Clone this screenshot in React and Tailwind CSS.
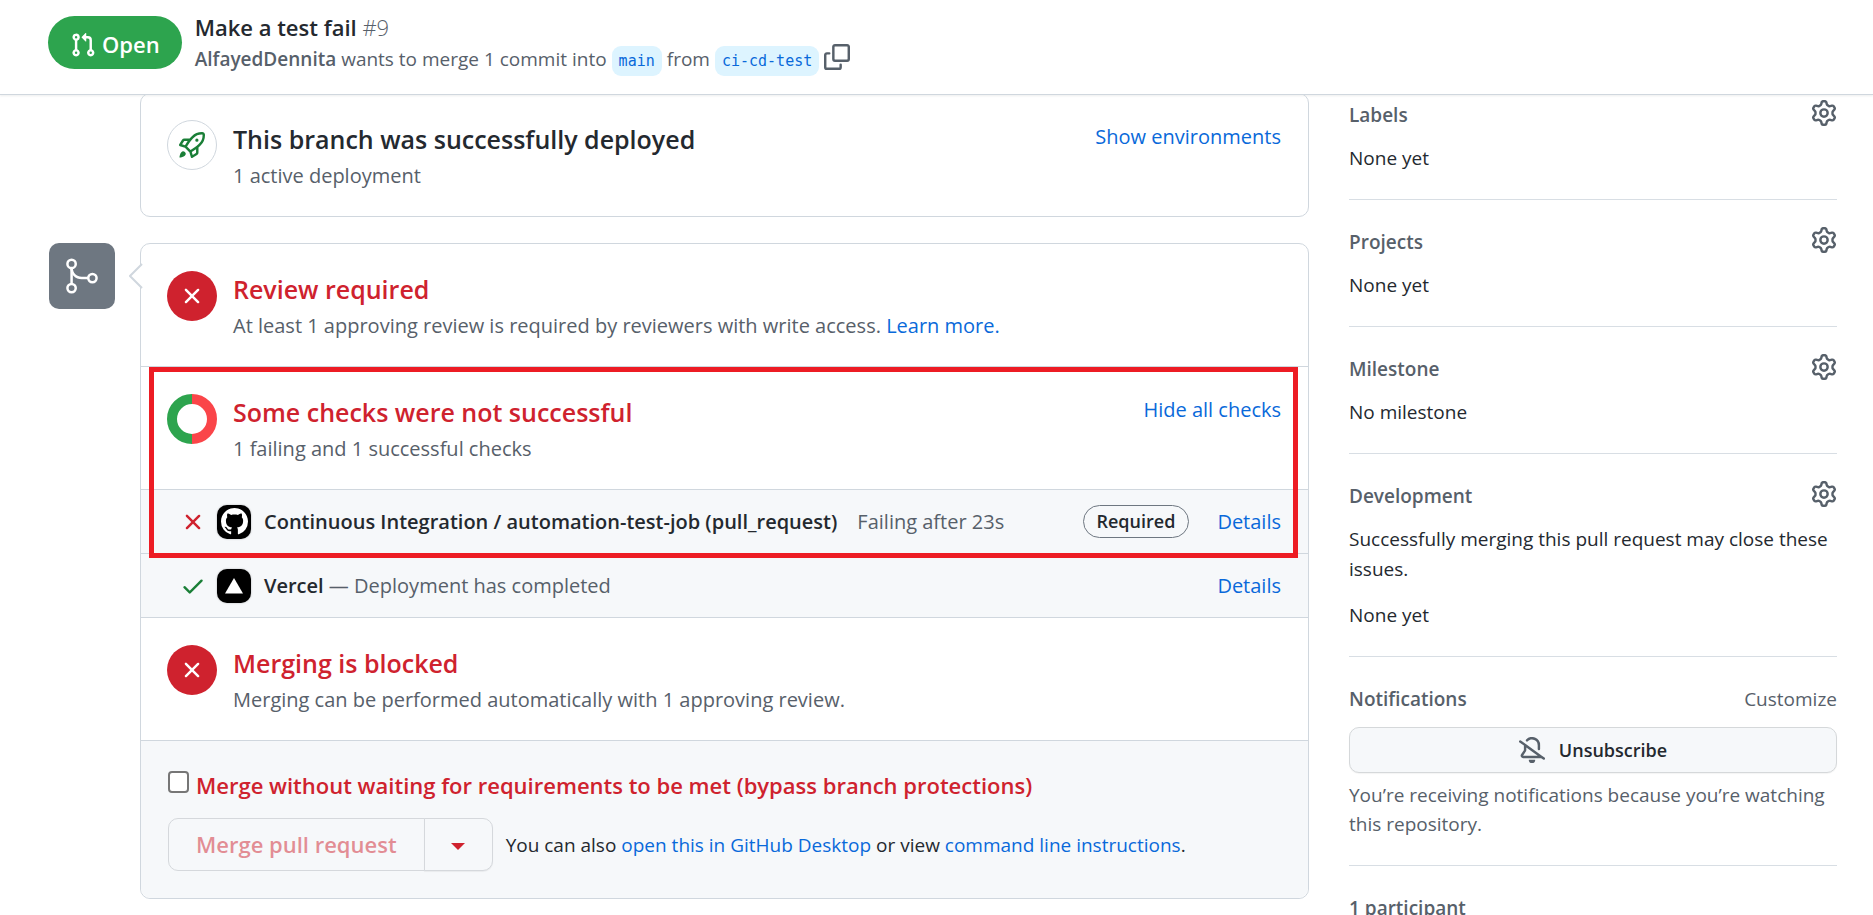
import React from "react";
import { GoGitMerge } from "react-icons/go";

const ICONS = {
  pullRequest:
    "M1.5 3.25a2.25 2.25 0 1 1 3 2.122v5.256a2.251 2.251 0 1 1-1.5 0V5.372A2.25 2.25 0 0 1 1.5 3.25Zm5.677-.177L9.573.677A.25.25 0 0 1 10 .854V2.5h1A2.5 2.5 0 0 1 13.5 5v5.628a2.251 2.251 0 1 1-1.5 0V5a1 1 0 0 0-1-1h-1v1.646a.25.25 0 0 1-.427.177L7.177 3.427a.25.25 0 0 1 0-.354ZM3.75 2.5a.75.75 0 1 0 0 1.5.75.75 0 0 0 0-1.5Zm0 9.5a.75.75 0 1 0 0 1.5.75.75 0 0 0 0-1.5Zm8.25.75a.75.75 0 1 0 1.5 0 .75.75 0 0 0-1.5 0Z",
  rocket:
    "M14.064 0h.186C15.216 0 16 .784 16 1.75v.186a8.752 8.752 0 0 1-2.564 6.186l-.458.459c-.314.314-.641.616-.979.904v3.207c0 .608-.315 1.172-.833 1.49l-2.774 1.707a.749.749 0 0 1-1.11-.418l-.954-3.102a1.214 1.214 0 0 1-.145-.125L3.754 9.816a1.218 1.218 0 0 1-.124-.145L.528 8.717a.749.749 0 0 1-.418-1.11l1.71-2.774A1.748 1.748 0 0 1 3.31 4h3.204c.288-.338.59-.665.904-.979l.459-.458A8.749 8.749 0 0 1 14.064 0ZM8.938 3.623h-.002l-.458.458c-.76.76-1.437 1.598-2.02 2.5l-1.5 2.317 2.143 2.143 2.317-1.5c.902-.583 1.74-1.26 2.499-2.02l.459-.458a7.25 7.25 0 0 0 2.123-5.127V1.75a.25.25 0 0 0-.25-.25h-.186a7.249 7.249 0 0 0-5.125 2.123ZM3.56 14.56c-.732.732-2.334 1.045-3.005 1.148a.234.234 0 0 1-.201-.064.234.234 0 0 1-.064-.201c.103-.671.416-2.273 1.15-3.003a1.502 1.502 0 1 1 2.12 2.12Zm6.94-3.935c-.088.06-.177.118-.266.175l-2.35 1.521.548 1.783 1.949-1.2a.25.25 0 0 0 .119-.213ZM3.678 8.116 5.2 5.766c.058-.09.117-.178.176-.266H3.309a.25.25 0 0 0-.213.119l-1.2 1.95ZM12 5a1 1 0 1 1-2 0 1 1 0 0 1 2 0Z",
  copy:
    "M0 6.75C0 5.784.784 5 1.75 5h1.5a.75.75 0 0 1 0 1.5h-1.5a.25.25 0 0 0-.25.25v7.5c0 .138.112.25.25.25h7.5a.25.25 0 0 0 .25-.25v-1.5a.75.75 0 0 1 1.5 0v1.5A1.75 1.75 0 0 1 9.25 16h-7.5A1.75 1.75 0 0 1 0 14.25ZM5 1.75C5 .784 5.784 0 6.75 0h7.5C15.216 0 16 .784 16 1.75v7.5A1.75 1.75 0 0 1 14.25 11h-7.5A1.75 1.75 0 0 1 5 9.25Zm1.75-.25a.25.25 0 0 0-.25.25v7.5c0 .138.112.25.25.25h7.5a.25.25 0 0 0 .25-.25v-7.5a.25.25 0 0 0-.25-.25Z",
  gear:
    "M8 0a8.2 8.2 0 0 1 .701.031C9.444.095 9.99.645 10.16 1.29l.288 1.107c.018.066.079.158.212.224.231.114.454.243.668.386.123.082.233.09.299.071l1.103-.303c.644-.176 1.392.021 1.82.63.27.385.506.792.704 1.218.315.675.111 1.422-.364 1.891l-.814.806c-.049.048-.098.147-.088.294.016.257.016.515 0 .772-.01.147.038.246.088.294l.814.806c.475.469.679 1.216.364 1.891a7.977 7.977 0 0 1-.704 1.217c-.428.61-1.176.807-1.82.63l-1.102-.302c-.067-.019-.177-.011-.3.071a5.909 5.909 0 0 1-.668.386c-.133.066-.194.158-.211.224l-.29 1.106c-.168.646-.715 1.196-1.458 1.26a8.006 8.006 0 0 1-1.402 0c-.743-.064-1.289-.614-1.458-1.26l-.289-1.106c-.018-.066-.079-.158-.212-.224a5.738 5.738 0 0 1-.668-.386c-.123-.082-.233-.09-.299-.071l-1.103.303c-.644.176-1.392-.021-1.82-.63a8.12 8.12 0 0 1-.704-1.218c-.315-.675-.111-1.422.363-1.891l.815-.806c.05-.048.098-.147.088-.294a6.214 6.214 0 0 1 0-.772c.01-.147-.038-.246-.088-.294l-.815-.806C.635 6.045.431 5.298.746 4.623a7.92 7.92 0 0 1 .704-1.217c.428-.61 1.176-.807 1.82-.63l1.102.302c.067.019.177.011.3-.071.214-.143.437-.272.668-.386.133-.066.194-.158.211-.224l.29-1.106C6.009.645 6.556.095 7.299.03 7.53.01 7.764 0 8 0Zm-.571 1.525c-.036.003-.108.036-.137.146l-.289 1.105c-.147.561-.549.967-.998 1.189-.173.086-.34.183-.5.29-.417.278-.97.423-1.529.27l-1.103-.303c-.109-.03-.175.016-.195.045-.22.312-.412.644-.573.99-.014.031-.021.11.059.19l.815.806c.411.406.562.957.53 1.456a4.709 4.709 0 0 0 0 .582c.032.499-.119 1.05-.53 1.456l-.815.806c-.081.08-.073.159-.059.19.162.346.353.677.573.989.02.03.085.076.195.046l1.102-.303c.56-.153 1.113-.008 1.53.27.161.107.328.204.501.29.447.222.85.629.997 1.189l.289 1.105c.029.109.101.143.137.146a6.6 6.6 0 0 0 1.142 0c.036-.003.108-.036.137-.146l.289-1.105c.147-.561.549-.967.998-1.189.173-.086.34-.183.5-.29.417-.278.97-.423 1.529-.27l1.103.303c.109.029.175-.016.195-.045.22-.313.411-.644.573-.99.014-.031.021-.11-.059-.19l-.815-.806c-.411-.406-.562-.957-.53-1.456a4.709 4.709 0 0 0 0-.582c-.032-.499.119-1.05.53-1.456l.815-.806c.081-.08.073-.159.059-.19a6.464 6.464 0 0 0-.573-.989c-.02-.03-.085-.076-.195-.046l-1.102.303c-.56.153-1.113.008-1.53-.27a4.44 4.44 0 0 0-.501-.29c-.447-.222-.85-.629-.997-1.189l-.289-1.105c-.029-.11-.101-.143-.137-.146a6.6 6.6 0 0 0-1.142 0ZM11 8a3 3 0 1 1-6 0 3 3 0 0 1 6 0ZM9.5 8a1.5 1.5 0 1 0-3.001.001A1.5 1.5 0 0 0 9.5 8Z",
  bellSlash:
    "m4.182 4.31.016.011 10.104 7.316.013.01 1.375.996a.75.75 0 1 1-.88 1.214L13.626 13H2.518a1.516 1.516 0 0 1-1.263-2.36l1.703-2.554A.255.255 0 0 0 3 7.947V5.305L.31 3.357a.75.75 0 1 1 .88-1.214Zm7.373 7.19L4.5 6.391v1.556c0 .346-.102.683-.294.97l-1.703 2.556a.017.017 0 0 0-.003.01c0 .005.002.009.005.012l.006.004.007.001ZM8 1.5c-.997 0-1.895.416-2.534 1.086A.75.75 0 1 1 4.38 1.55 5 5 0 0 1 13 5v2.373a.75.75 0 0 1-1.5 0V5A3.5 3.5 0 0 0 8 1.5ZM8 16a2 2 0 0 1-1.985-1.75c-.017-.137.097-.25.235-.25h3.5c.138 0 .252.113.235.25A2 2 0 0 1 8 16Z",
  x:
    "M3.72 3.72a.75.75 0 0 1 1.06 0L8 6.94l3.22-3.22a.749.749 0 0 1 1.275.326.749.749 0 0 1-.215.734L9.06 8l3.22 3.22a.749.749 0 0 1-.326 1.275.749.749 0 0 1-.734-.215L8 9.06l-3.22 3.22a.751.751 0 0 1-1.042-.018.751.751 0 0 1-.018-1.042L6.94 8 3.72 4.78a.75.75 0 0 1 0-1.06Z",
  check:
    "M13.78 4.22a.75.75 0 0 1 0 1.06l-7.25 7.25a.75.75 0 0 1-1.06 0L2.22 9.28a.751.751 0 0 1 .018-1.042.751.751 0 0 1 1.042-.018L6 10.94l6.72-6.72a.75.75 0 0 1 1.06 0Z",
  github:
    "M8 0c4.42 0 8 3.58 8 8a8.013 8.013 0 0 1-5.45 7.59c-.4.08-.55-.17-.55-.38 0-.27.01-1.13.01-2.2 0-.75-.25-1.23-.54-1.48 1.78-.2 3.65-.88 3.65-3.95 0-.88-.31-1.59-.82-2.15.08-.2.36-1.02-.08-2.12 0 0-.67-.22-2.2.82-.64-.18-1.32-.27-2-.27-.68 0-1.36.09-2 .27-1.53-1.03-2.2-.82-2.2-.82-.44 1.1-.16 1.92-.08 2.12-.51.56-.82 1.28-.82 2.15 0 3.06 1.86 3.75 3.64 3.95-.23.2-.44.55-.51 1.07-.46.21-1.61.55-2.33-.66-.15-.24-.6-.83-1.23-.82-.67.01-.27.38.01.53.34.19.73.9.82 1.13.16.45.68 1.31 2.69.94 0 .67.01 1.3.01 1.49 0 .21-.15.45-.55.38A7.995 7.995 0 0 1 0 8c0-4.42 3.58-8 8-8Z",
};

function Icon({ name, className = "" }) {
  return (
    <svg viewBox="0 0 16 16" fill="currentColor" aria-hidden="true" className={`shrink-0 ${className}`}>
      <path d={ICONS[name]} />
    </svg>
  );
}

function Link({ children, className = "" }) {
  return (
    <a href="#" className={`text-[#0969da] hover:underline ${className}`}>
      {children}
    </a>
  );
}

function Header() {
  return (
    <header className="flex h-[95px] shrink-0 items-start gap-[13px] border-b border-[#d0d7de] bg-white pl-12 shadow-[0_1px_2px_rgba(31,35,40,0.08)]">
      <span className="mt-4 flex h-[53px] items-center gap-[6px] rounded-full bg-[#2da44e] px-[22px] pt-1 text-[22px] font-semibold text-white">
        <Icon name="pullRequest" className="h-[26px] w-[26px]" />
        Open
      </span>
      <div className="pt-3">
        <h1 className="text-[22px] leading-[30px] font-semibold text-[#24292f]">
          Make a test fail <span className="font-light text-[#57606a]">#9</span>
        </h1>
        <div className="flex items-center gap-[5px] text-[19px] leading-[34px] text-[#57606a]">
          <span>
            <a href="#" className="font-semibold">AlfayedDennita</a> wants to merge 1 commit into
          </span>
          <BranchName>main</BranchName>
          <span>from</span>
          <BranchName>ci-cd-test</BranchName>
          <button type="button" aria-label="Copy branch name" className="pb-1">
            <Icon name="copy" className="h-[26px] w-[26px]" />
          </button>
        </div>
      </div>
    </header>
  );
}

function BranchName({ children }) {
  return (
    <a
      href="#"
      className="mt-1 flex h-[30px] items-center rounded-[9px] bg-[#ddf4ff] px-[7px] font-['DejaVu_Sans_Mono',monospace] text-[15px] text-[#0969da]"
    >
      {children}
    </a>
  );
}

function StatusRow({ icon, title, titleClass = "text-[#cf222e]", action, children }) {
  return (
    <div className="flex items-start gap-4 pt-[25px] pr-[27px] pb-[23px] pl-[26px]">
      {icon}
      <div className="flex-1">
        <h3 className={`text-[25px] leading-[40px] font-semibold ${titleClass}`}>{title}</h3>
        <p className="text-[20px] leading-[34px] text-[#57606a]">{children}</p>
      </div>
      {action}
    </div>
  );
}

function ErrorCircle() {
  return (
    <span className="mt-[2px] flex h-[50px] w-[50px] shrink-0 items-center justify-center rounded-full bg-[#cf222e] text-white">
      <Icon name="x" className="h-[26px] w-[26px]" />
    </span>
  );
}

function Donut() {
  return (
    <svg viewBox="0 0 50 50" className="mt-[2px] h-[50px] w-[50px] shrink-0" fill="none" strokeWidth="10">
      <path d="M25 5a20 20 0 0 1 0 40" stroke="#fa4549" />
      <path d="M25 45a20 20 0 0 1 0-40" stroke="#2da44e" />
    </svg>
  );
}

function CheckRow({ status, avatar, name, children, required }) {
  return (
    <div className="flex min-h-[64px] items-center border-t border-[#d0d7de] bg-[#f6f8fa] pr-[27px] pl-[39px] text-[20px]">
      {status}
      <span className="mr-[13px] ml-[11px] flex h-[34px] w-[34px] shrink-0 items-center justify-center rounded-[10px] bg-black text-white shadow-[0_0_2px_rgba(0,0,0,0.3)]">
        {avatar}
      </span>
      <div className="flex-1 text-[#57606a]">
        <strong className="font-semibold text-[#24292f]">{name}</strong>
        {children}
      </div>
      {required && (
        <span className="mr-7 rounded-full border border-[#6e7781] px-[13px] text-[18px] leading-[31px] font-semibold text-[#24292f]">
          Required
        </span>
      )}
      <Link>Details</Link>
    </div>
  );
}

function MergeBox() {
  return (
    <div className="relative flex-1 rounded-[10px] border border-[#d0d7de] bg-white">
      <svg viewBox="0 0 14 26" className="absolute top-[19px] -left-3 h-[26px] w-[14px]" aria-hidden="true">
        <path d="M13 1 1 13l12 12" fill="#fff" stroke="#d0d7de" strokeWidth="2" />
      </svg>
      <StatusRow icon={<ErrorCircle />} title="Review required">
        At least 1 approving review is required by reviewers with write access. <Link>Learn more.</Link>
      </StatusRow>
      <div className="relative border-t border-[#d0d7de]">
        <StatusRow
          icon={<Donut />}
          title="Some checks were not successful"
          action={
            <button type="button" className="text-[20px] leading-[36px] text-[#0969da]">
              Hide all checks
            </button>
          }
        >
          1 failing and 1 successful checks
        </StatusRow>
        <CheckRow
          status={<Icon name="x" className="h-[26px] w-[26px] text-[#cf222e]" />}
          avatar={<Icon name="github" className="h-[27px] w-[27px]" />}
          name="Continuous Integration / automation-test-job (pull_request)"
          required
        >
          <span className="ml-5">Failing after 23s</span>
        </CheckRow>
        <div className="pointer-events-none absolute top-0 right-[10px] -bottom-[5px] left-2 z-10 border-[5px] border-[#ed1c24]" />
      </div>
      <CheckRow
        status={<Icon name="check" className="h-[26px] w-[26px] text-[#1a7f37]" />}
        avatar={
          <svg viewBox="0 0 18 16" className="h-[16px] w-[18px]" fill="#fff" aria-hidden="true">
            <path d="M9 0l9 15.5H0z" />
          </svg>
        }
        name="Vercel"
      >
        {" "}— Deployment has completed
      </CheckRow>
      <div className="border-t border-[#d0d7de]">
        <StatusRow icon={<ErrorCircle />} title="Merging is blocked">
          Merging can be performed automatically with 1 approving review.
        </StatusRow>
      </div>
      <div className="rounded-b-[10px] border-t border-[#d0d7de] bg-[#f6f8fa] px-[27px] pt-[27px] pb-[27px]">
        <label className="flex items-start gap-[7px] text-[22px] leading-[34px] font-semibold text-[#cf222e]">
          <input
            type="checkbox"
            className="mt-[3px] h-[22px] w-[21px] shrink-0 appearance-none rounded-[4px] border-2 border-[#767676] bg-white checked:bg-[#0969da]"
          />
          Merge without waiting for requirements to be met (bypass branch protections)
        </label>
        <div className="mt-4 flex items-center gap-[13px]">
          <div className="flex h-[53px]">
            <button
              type="button"
              disabled
              className="rounded-l-[10px] border border-[#d5d8dc] px-[27px] text-[22px] font-semibold text-[#cf222e]/50"
            >
              Merge pull request
            </button>
            <button
              type="button"
              aria-label="Select merge method"
              className="-ml-px flex w-[69px] items-center justify-center rounded-r-[10px] border border-[#d5d8dc] bg-[#f6f8fa] pt-1 shadow-[0_1px_1px_rgba(31,35,40,0.06)]"
            >
              <svg viewBox="0 0 14 7" className="h-[7px] w-[14px]" fill="#cf222e" aria-hidden="true">
                <path d="M0 0h14L7 7z" />
              </svg>
            </button>
          </div>
          <p className="text-[19px] leading-[30px] text-[#24292f]">
            You can also <Link>open this in GitHub Desktop</Link> or view <Link>command line instructions</Link>.
          </p>
        </div>
      </div>
    </div>
  );
}

function SidebarSection({ title, action, first, children }) {
  return (
    <section className={`pb-[26px] ${first ? "pt-[5px]" : "border-t border-[#d8dee4] pt-[27px]"}`}>
      <div className="flex items-start justify-between font-semibold text-[#57606a]">
        <h3>{title}</h3>
        {action}
      </div>
      {children}
    </section>
  );
}

function GearButton({ label }) {
  return (
    <button type="button" aria-label={label} className="text-[#57606a]">
      <Icon name="gear" className="h-[26px] w-[26px]" />
    </button>
  );
}

function Sidebar() {
  return (
    <aside className="w-[488px] shrink-0 text-[19px] leading-[30px] text-[#24292f]">
      <SidebarSection first title="Labels" action={<GearButton label="Edit labels" />}>
        <p className="mt-[13px]">None yet</p>
      </SidebarSection>
      <SidebarSection title="Projects" action={<GearButton label="Edit projects" />}>
        <p className="mt-[13px]">None yet</p>
      </SidebarSection>
      <SidebarSection title="Milestone" action={<GearButton label="Edit milestone" />}>
        <p className="mt-[13px]">No milestone</p>
      </SidebarSection>
      <SidebarSection title="Development" action={<GearButton label="Link issues" />}>
        <p className="mt-[13px]">Successfully merging this pull request may close these issues.</p>
        <p className="mt-4">None yet</p>
      </SidebarSection>
      <SidebarSection title="Notifications" action={<a href="#" className="font-normal">Customize</a>}>
        <button
          type="button"
          className="mt-[13px] mb-2 flex h-[46px] w-full items-center justify-center gap-[14px] rounded-[10px] border border-[#d5d8da] bg-[#f6f8fa] text-[18px] font-semibold shadow-[0_1px_1px_rgba(31,35,40,0.05)]"
        >
          <Icon name="bellSlash" className="h-[26px] w-[26px] text-[#57606a]" />
          Unsubscribe
        </button>
        <p className="leading-[29px] text-[#57606a]">
          You’re receiving notifications because you’re watching this repository.
        </p>
      </SidebarSection>
      <SidebarSection title="1 participant" />
    </aside>
  );
}

export default function App() {
  return (
    <div className="flex h-screen flex-col overflow-hidden bg-white font-['Open_Sans','Noto_Sans',sans-serif]">
      <Header />
      <main className="flex min-h-0 flex-1 items-start gap-10 overflow-hidden pr-9 pl-[49px]">
        <div className="flex-1">
          <div className="-mt-[2px] ml-[91px] rounded-[10px] border border-[#d0d7de]">
            <StatusRow
              icon={
                <span className="mt-[1px] flex h-[50px] w-[50px] shrink-0 items-center justify-center rounded-full border border-[#d0d7de] text-[#1a7f37]">
                  <Icon name="rocket" className="h-[26px] w-[26px]" />
                </span>
              }
              title="This branch was successfully deployed"
              titleClass="text-[#24292f]"
              action={
                <button type="button" className="text-[20px] leading-[36px] text-[#0969da]">
                  Show environments
                </button>
              }
            >
              1 active deployment
            </StatusRow>
          </div>
          <div className="mt-[26px] flex items-start gap-[25px]">
            <span className="flex h-[66px] w-[66px] shrink-0 items-center justify-center rounded-[10px] bg-[#6e7781] text-white">
              <GoGitMerge className="h-[40px] w-[40px]" />
            </span>
            <MergeBox />
          </div>
        </div>
        <Sidebar />
      </main>
    </div>
  );
}
